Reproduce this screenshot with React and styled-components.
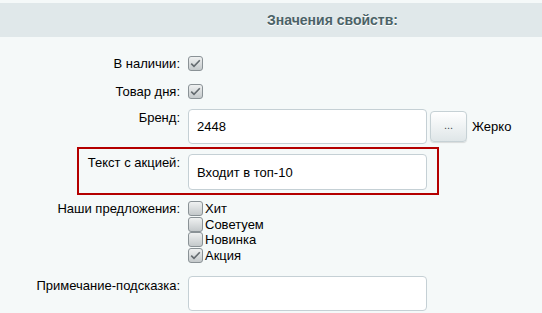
import React from 'react'
import styled, { createGlobalStyle } from 'styled-components'

const Global = createGlobalStyle`
  html, body {
    margin: 0;
    padding: 0;
    background: #f5f9f9;
  }
  body {
    font-family: "Liberation Sans", Arial, sans-serif;
    font-size: 13px;
    color: #000;
  }
`

const Page = styled.div`
  width: 542px;
  height: 313px;
  overflow: hidden;
  padding-top: 3px;
  box-sizing: border-box;
`

const Header = styled.div`
  height: 34px;
  background: #e0e8ea;
  display: flex;
  align-items: center;
  padding-left: 267px;
  box-sizing: border-box;
`

const HeaderTitle = styled.span`
  font-weight: bold;
  font-size: 14px;
  color: #4b6267;
  text-shadow: 0 1px 0 #fff;
`

const Form = styled.div`
  display: flex;
  flex-direction: column;
`

const Row = styled.div`
  display: grid;
  grid-template-columns: ${p => p.$labelWidth || 180}px auto;
  column-gap: 8px;
  align-items: start;
  margin-top: ${p => p.$top || 0}px;
  line-height: 15px;
`

const HighlightRow = styled(Row)`
  margin-left: 77px;
  width: 362px;
  box-sizing: border-box;
  border: 2px solid #b40000;
  padding: 5px 0 3px 0;
`

const Label = styled.div`
  text-align: right;
  white-space: nowrap;
  padding-top: ${p => p.$pad || 0}px;
`

const Field = styled.div`
  display: flex;
  align-items: center;
`

const TextInput = styled.div`
  width: 239px;
  height: ${p => p.$h || 35}px;
  box-sizing: border-box;
  background: #fff;
  border: 1px solid #c5d0d5;
  border-radius: 4px;
  padding: 0 8px;
  display: flex;
  align-items: center;
  font-size: 13px;
  color: #000;
`

const DotsButton = styled.div`
  width: 37px;
  height: 31px;
  margin-left: 3px;
  box-sizing: border-box;
  border: 1px solid #c6d1d5;
  border-radius: 4px;
  background: linear-gradient(#ffffff, #dfe6e8);
  box-shadow: 0 1px 1px rgba(0, 0, 0, 0.12);
  display: flex;
  align-items: center;
  justify-content: center;
  color: #3f4a50;
  font-size: 11px;
  padding-bottom: 2px;
`

const Linked = styled.span`
  margin-left: 5px;
`

const Box = styled.span`
  width: 15px;
  height: 15px;
  box-sizing: border-box;
  border: 1px solid #8a9296;
  border-radius: 3px;
  background: linear-gradient(#eff1f1, #c4c9cb);
  display: inline-flex;
  align-items: center;
  justify-content: center;
  flex-shrink: 0;
`

const CheckList = styled.div`
  display: flex;
  flex-direction: column;
`

const CheckItem = styled.label`
  display: flex;
  align-items: center;
  height: 15.5px;
  gap: 2px;
`

const Checkbox = ({ checked }) => (
  <Box>
    {checked && (
      <svg width="11" height="9" viewBox="0 0 11 9">
        <path d="M1.2 4.6 L4 7.4 L9.8 1.2" fill="none" stroke="#646b6f" strokeWidth="1.6" />
      </svg>
    )}
  </Box>
)

const offers = [
  { name: 'Хит', checked: false },
  { name: 'Советуем', checked: false },
  { name: 'Новинка', checked: false },
  { name: 'Акция', checked: true }
]

export default function App () {
  return (
    <Page>
      <Global />
      <Header>
        <HeaderTitle>Значения свойств:</HeaderTitle>
      </Header>
      <Form>
        <Row $top={19}>
          <Label>В наличии:</Label>
          <Field><Checkbox checked /></Field>
        </Row>
        <Row $top={13}>
          <Label>Товар дня:</Label>
          <Field><Checkbox checked /></Field>
        </Row>
        <Row $top={10}>
          <Label $pad={1}>Бренд:</Label>
          <Field>
            <TextInput>2448</TextInput>
            <DotsButton>...</DotsButton>
            <Linked>Жерко</Linked>
          </Field>
        </Row>
        <HighlightRow $top={3} $labelWidth={101}>
          <Label $pad={1}>Текст с акцией:</Label>
          <Field>
            <TextInput $h={36}>Входит в топ-10</TextInput>
          </Field>
        </HighlightRow>
        <Row $top={6}>
          <Label>Наши предложения:</Label>
          <CheckList>
            {offers.map(o => (
              <CheckItem key={o.name}>
                <Checkbox checked={o.checked} />
                {o.name}
              </CheckItem>
            ))}
          </CheckList>
        </Row>
        <Row $top={13}>
          <Label $pad={2}>Примечание-подсказка:</Label>
          <Field>
            <TextInput $h={35} />
          </Field>
        </Row>
      </Form>
    </Page>
  )
}
